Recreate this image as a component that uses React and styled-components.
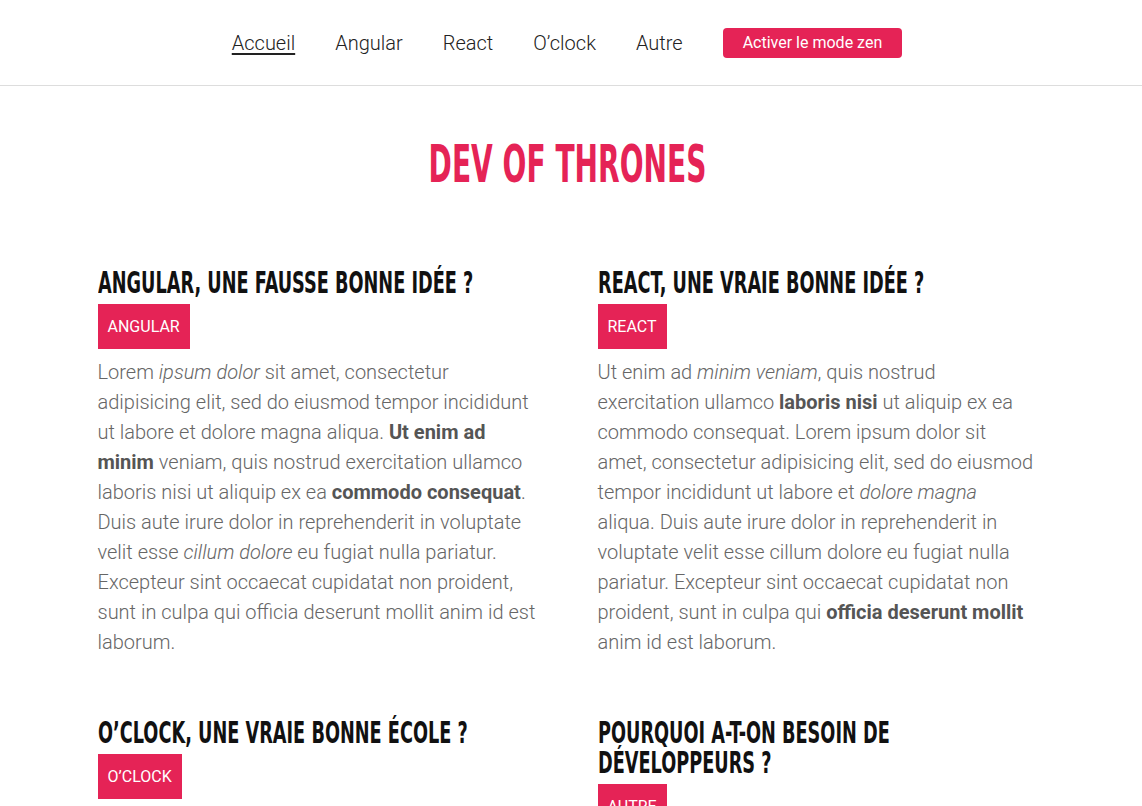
import React from "react";
import styled, { createGlobalStyle } from "styled-components";

const pink = "#e52356";
const textGrey = "#666";
// no Oswald offline: a condensed bold face squeezed horizontally stands in for it
const titleFont = `"DejaVu Sans Condensed", "DejaVu Sans", sans-serif`;

const Global = createGlobalStyle`
  body {
    margin: 0;
    background: #fff;
    font-family: Roboto, "Liberation Sans", sans-serif;
    overflow-x: hidden;
  }
`;

const Header = styled.header`
  height: 86px;
  border-bottom: 1px solid #ddd;
  display: flex;
  align-items: center;
  justify-content: center;
  box-sizing: border-box;
`;

const Nav = styled.nav`
  display: flex;
  align-items: center;
  gap: 40px;
  padding-right: 8px;
`;

const NavLink = styled.a`
  font-size: 20px;
  font-weight: 300;
  color: #222;
  text-decoration: ${props => (props.active ? "underline" : "none")};
  text-underline-offset: 3px;
  cursor: pointer;
`;

const ZenButton = styled.button`
  height: 30px;
  padding: 0 20px;
  border: none;
  border-radius: 4px;
  background: ${pink};
  color: #fff;
  font-family: Roboto, sans-serif;
  font-size: 16px;
  font-weight: 400;
  cursor: pointer;
`;

const Main = styled.main`
  padding-right: 7px;
`;

const Title = styled.h1`
  margin: 48px 0 0;
  text-align: center;
  color: ${pink};
  font-family: ${titleFont};
  font-weight: 700;
  font-size: 52px;
  line-height: 60px;
  span {
    display: inline-block;
    transform: scaleX(0.6);
  }
`;

const Articles = styled.section`
  margin-top: 73px;
  display: grid;
  grid-template-columns: 440px 440px;
  justify-content: center;
  column-gap: 60px;
  row-gap: 60px;
`;

const Article = styled.article`
  min-width: 0;
`;

const ArticleTitle = styled.h2`
  width: 690px;
  margin: 0 0 7px;
  color: #111;
  font-family: ${titleFont};
  font-weight: 700;
  font-size: 31px;
  line-height: 30px;
  transform: scaleX(0.635);
  transform-origin: left top;
`;

const Tag = styled.span`
  height: 45px;
  display: inline-flex;
  align-items: center;
  padding: 0 10px;
  background: ${pink};
  color: #fff;
  font-size: 16px;
  font-weight: 400;
`;

const Text = styled.p`
  margin: 8px 0 0;
  color: ${textGrey};
  font-size: 20px;
  font-weight: 300;
  line-height: 30px;
  b {
    font-weight: 700;
    color: #555;
  }
`;

const App = () => (
  <>
    <Global />
    <Header>
      <Nav>
        <NavLink active>Accueil</NavLink>
        <NavLink>Angular</NavLink>
        <NavLink>React</NavLink>
        <NavLink>O’clock</NavLink>
        <NavLink>Autre</NavLink>
        <ZenButton>Activer le mode zen</ZenButton>
      </Nav>
    </Header>
    <Main>
      <Title>
        <span>DEV OF THRONES</span>
      </Title>
      <Articles>
        <Article>
          <ArticleTitle>ANGULAR, UNE FAUSSE BONNE IDÉE ?</ArticleTitle>
          <Tag>ANGULAR</Tag>
          <Text>
            Lorem <i>ipsum dolor</i> sit amet, consectetur adipisicing elit, sed do eiusmod tempor
            incididunt ut labore et dolore magna aliqua. <b>Ut enim ad minim</b> veniam, quis
            nostrud exercitation ullamco laboris nisi ut aliquip ex ea <b>commodo consequat</b>.
            Duis aute irure dolor in reprehenderit in voluptate velit esse <i>cillum dolore</i> eu
            fugiat nulla pariatur. Excepteur sint occaecat cupidatat non proident, sunt in culpa qui
            officia deserunt mollit anim id est laborum.
          </Text>
        </Article>
        <Article>
          <ArticleTitle>REACT, UNE VRAIE BONNE IDÉE ?</ArticleTitle>
          <Tag>REACT</Tag>
          <Text>
            Ut enim ad <i>minim veniam</i>, quis nostrud exercitation ullamco <b>laboris nisi</b> ut
            aliquip ex ea commodo consequat. Lorem ipsum dolor sit amet, consectetur adipisicing
            elit, sed do eiusmod tempor incididunt ut labore et <i>dolore magna</i> aliqua. Duis
            aute irure dolor in reprehenderit in voluptate velit esse cillum dolore eu fugiat nulla
            pariatur. Excepteur sint occaecat cupidatat non proident, sunt in culpa qui{" "}
            <b>officia deserunt mollit</b> anim id est laborum.
          </Text>
        </Article>
        <Article>
          <ArticleTitle>O’CLOCK, UNE VRAIE BONNE ÉCOLE ?</ArticleTitle>
          <Tag>O’CLOCK</Tag>
          <Text>
            Duis aute irure dolor in reprehenderit in voluptate velit esse cillum dolore eu fugiat
            nulla pariatur. Lorem ipsum dolor sit amet, consectetur adipisicing elit.
          </Text>
        </Article>
        <Article>
          <ArticleTitle>POURQUOI A-T-ON BESOIN DE DÉVELOPPEURS ?</ArticleTitle>
          <Tag>AUTRE</Tag>
          <Text>
            Excepteur sint occaecat cupidatat non proident, sunt in culpa qui officia deserunt
            mollit anim id est laborum.
          </Text>
        </Article>
      </Articles>
    </Main>
  </>
);

export default App;
